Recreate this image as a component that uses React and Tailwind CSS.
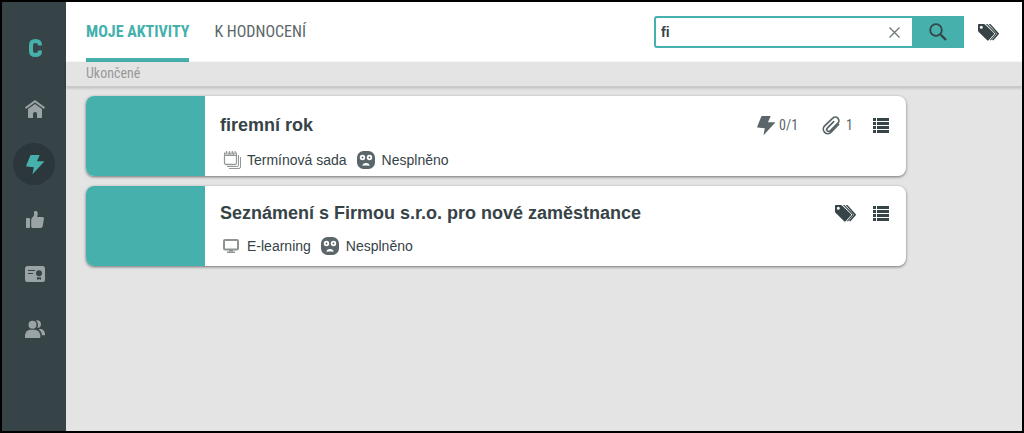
import { useState } from 'react'

const navItems = [
  { label: 'Domů', Icon: HomeIcon },
  { label: 'Aktivity', Icon: BoltIcon, active: true },
  { label: 'Hodnocení', Icon: ThumbIcon },
  { label: 'Certifikáty', Icon: CertificateIcon },
  { label: 'Lidé', Icon: PeopleIcon },
]

const activities = [
  {
    id: 1,
    title: 'firemní rok',
    type: 'Termínová sada',
    TypeIcon: CalendarsIcon,
    status: 'Nesplněno',
    progress: '0/1',
    attachments: 1,
  },
  {
    id: 2,
    title: 'Seznámení s Firmou s.r.o. pro nové zaměstnance',
    type: 'E-learning',
    TypeIcon: MonitorIcon,
    status: 'Nesplněno',
    tagged: true,
  },
]

export default function App() {
  const [tab, setTab] = useState('MOJE AKTIVITY')
  const [query, setQuery] = useState('fi')

  return (
    <div className="flex min-h-screen border-2 border-black bg-[#e4e4e4] font-['Liberation_Sans',sans-serif] text-[#364347]">
      <Sidebar />
      <div className="flex min-w-0 flex-1 flex-col">
        <header className="flex h-[60px] items-center justify-between bg-white pr-[23px] pl-5">
          <nav className="flex h-full gap-[25px] font-['Roboto_Condensed','Liberation_Sans_Narrow',sans-serif] text-base">
            {['MOJE AKTIVITY', 'K HODNOCENÍ'].map((name) => (
              <button
                key={name}
                onClick={() => setTab(name)}
                className={`h-full cursor-pointer border-b-4 pt-1 whitespace-nowrap ${
                  tab === name
                    ? 'border-[#45b0ac] font-bold text-[#45b0ac]'
                    : 'border-transparent text-[#5a6669]'
                }`}
              >
                {name}
              </button>
            ))}
          </nav>
          <div className="flex items-center gap-[14px]">
            <SearchBox query={query} onChange={setQuery} />
            <button aria-label="Štítky" className="cursor-pointer"><TagsIcon /></button>
          </div>
        </header>
        <h2 className="h-[25px] border-b border-[#cbcbcb] pl-5 font-['Roboto_Condensed','Liberation_Sans_Narrow',sans-serif] text-sm leading-[22px] text-[#999999] shadow-[0_1px_3px_rgba(0,0,0,0.2)]">
          Ukončené
        </h2>
        <main className="flex max-w-[860px] flex-col gap-[10px] px-5 pt-[9px] pb-[10px]">
          {activities.map((item) => <ActivityCard key={item.id} item={item} />)}
        </main>
      </div>
    </div>
  )
}

function Sidebar() {
  return (
    <aside className="flex w-16 shrink-0 flex-col items-center bg-[#364347] pt-[25px]">
      <a href="#" aria-label="Logo" className="flex h-[42px] items-center pl-[2px]">
        <svg width="13" height="18" viewBox="0 0 13 18" fill="none" stroke="#45b0ac" strokeWidth="4">
          <path d="M11 6.5V6Q11 2 6.5 2Q2 2 2 6V12Q2 16 6.5 16Q11 16 11 12V11.5" />
        </svg>
      </a>
      <nav className="mt-[19px] flex flex-col gap-[13px]">
        {navItems.map(({ label, Icon, active }) => (
          <a
            key={label}
            href="#"
            aria-label={label}
            className={`flex size-[42px] items-center justify-center rounded-full pl-[2px] ${
              active ? 'bg-[#2b373b] text-[#45b0ac]' : 'text-[#9aa3a5]'
            }`}
          >
            <Icon />
          </a>
        ))}
      </nav>
    </aside>
  )
}

function SearchBox({ query, onChange }) {
  return (
    <form className="flex h-8 w-[310px] rounded-l-[3px] border-2 border-r-0 border-[#45b0ac]" onSubmit={(e) => e.preventDefault()}>
      <input
        aria-label="Hledat"
        value={query}
        onChange={(e) => onChange(e.target.value)}
        className="min-w-0 flex-1 pl-[5px] text-sm font-bold text-[#364347] outline-none"
      />
      <button type="button" aria-label="Vymazat" onClick={() => onChange('')} className="flex w-9 cursor-pointer items-center justify-center">
        <svg width="11" height="11" viewBox="0 0 11 11" stroke="#69757a" strokeWidth="1.2">
          <path d="M.5.5l10 10M10.5.5l-10 10" />
        </svg>
      </button>
      <button type="submit" aria-label="Vyhledat" className="flex w-[52px] cursor-pointer items-center justify-center bg-[#45b0ac]">
        <svg width="18" height="18" viewBox="0 0 18 18" fill="none" stroke="#364347">
          <circle cx="7" cy="7" r="5.8" strokeWidth="1.8" />
          <path d="M10.8 10.8l1.4 1.4" strokeWidth="1.8" />
          <path d="M12 12l5 5" strokeWidth="2.4" />
        </svg>
      </button>
    </form>
  )
}

function ActivityCard({ item }) {
  const { title, type, TypeIcon, status, progress, attachments, tagged } = item
  return (
    <article className="flex min-h-20 overflow-hidden rounded-lg bg-white shadow-[0_1px_3px_rgba(0,0,0,0.5)]">
      <div className="w-[119px] shrink-0 bg-[#45b0ac]" />
      <div className="min-w-0 flex-1 pt-[14px] pr-[17px] pl-[15px]">
        <div className="flex items-center justify-between">
          <h3 className="text-lg leading-[26px] font-bold">{title}</h3>
          <div className="flex items-center font-['Roboto_Condensed','Liberation_Sans_Narrow',sans-serif] text-sm text-[#5a6669]">
            {progress && (
              <span className="mr-6 flex items-center gap-1 leading-[30px]"><BoltIcon />{progress}</span>
            )}
            {attachments && (
              <span className="mr-5 flex items-center gap-[6px] leading-[30px]"><ClipIcon />{attachments}</span>
            )}
            {tagged && (
              <button aria-label="Štítky" className="mr-[17px] cursor-pointer text-[#364347]"><TagsIcon /></button>
            )}
            <button aria-label="Seznam" className="cursor-pointer text-[#364347]"><ListIcon /></button>
          </div>
        </div>
        <div className="mt-2 flex h-[23px] items-center text-sm">
          <span className="flex w-[27px] pl-[3px]"><TypeIcon /></span>
          <span>{type}</span>
          <span className="mr-[7px] ml-[10px]"><FaceIcon /></span>
          <span>{status}</span>
        </div>
      </div>
    </article>
  )
}

function HomeIcon() {
  return (
    <svg width="20" height="18" viewBox="0 0 20 18" fill="currentColor">
      <path d="M10 0L0 7.2l1 1.8 9-6.400 9 6.400 1-1.800z" />
      <path d="M10 4L3 9v8.200q0 .8.8.8H8v-4q0-2 2-2t2 2v4h4.200q.8 0 .8-.8V9z" />
    </svg>
  )
}

function BoltIcon() {
  return (
    <svg width="18" height="19" viewBox="0 0 18 19" fill="currentColor">
      <path d="M5 0h8.200q.6 0 .3.600L11 6.200h6.500q.9 0 .3.800L7 18.700q-.5.500-.4-.2l1.200-6.200L.6 11.500q-.8-.1-.4-.8L4.300.5Q4.500 0 5 0z" />
    </svg>
  )
}

function ThumbIcon() {
  return (
    <svg width="18" height="17" viewBox="0 0 18 17" fill="currentColor">
      <rect y="7" width="4" height="10" rx="1" />
      <path d="M5.200 8L8 4.500V1q0-1 1-1h1.200q1.600.3 1.600 2.500L11.200 6H16.500q1.500 0 1.500 1.500l-1.300 7.800Q16.400 17 14.700 17H6.500q-1.300-.2-1.300-1.500z" />
    </svg>
  )
}

function CertificateIcon() {
  return (
    <svg width="20" height="16" viewBox="0 0 20 16">
      <rect width="20" height="16" rx="2.5" fill="currentColor" />
      <path d="M3 4.500h7M3 7.500h5" stroke="#364347" strokeWidth="1.2" />
      <circle cx="14" cy="7.3" r="3" fill="#364347" />
      <path d="M12 11.200h4V14l-2-1-2 1z" fill="#364347" />
    </svg>
  )
}

function PeopleIcon() {
  return (
    <svg width="20" height="18" viewBox="0 0 20 18" fill="currentColor">
      <circle cx="7.5" cy="4.7" r="4" />
      <path d="M0 18v-3Q1 10 5 9.700h5q4 .3 5.300 5.300V17q0 1-1 1z" />
      <path d="M11.500 0.200Q16 .2 16 4.200q0 3-3 3.800-.6 0-.5-.6 1.500-3.400-1.100-6.300-.5-.8.1-.9zM14 9h2q3.200.5 4 4.500v1.700h-3q-.5-3.700-3.300-6.200z" />
    </svg>
  )
}

function TagsIcon() {
  return (
    <svg width="21" height="17" viewBox="0 0 21 17" fill="#364347">
      <path fillRule="evenodd" d="M.8 0h4.800q1 0 1.700.7l8.500 8.400q.7.700 0 1.400l-5.200 5.800q-.7.700-1.400 0L.7 8Q0 7.300 0 6.400V.8Q0 0 .8 0zM3.300 1.700a1.500 1.500 0 100 3 1.500 1.500 0 000-3z" />
      <path d="M8 0h1.500l8.700 9q.7.700 0 1.400l-5.500 6.200-.8-.7 5.400-6.200z" />
      <path d="M10.700 0h1.700l8.200 9q.7.700 0 1.400l-5.400 6.200-1.200-.8 5.100-6z" />
    </svg>
  )
}

function ClipIcon() {
  return (
    <svg width="18" height="19" viewBox="2 2 20 21" fill="none" stroke="currentColor" strokeWidth="1.9" strokeLinecap="round">
      <path d="M20.400 11.300l-8.300 8.700a5 5 0 01-7.200-7L14 4.400a3.900 3.900 0 015.600 5.500l-8.500 8.600a2.200 2.200 0 01-3.200-3.100L15 8.300" />
    </svg>
  )
}

function ListIcon() {
  return (
    <svg width="16" height="15" viewBox="0 0 16 15" fill="currentColor">
      <path d="M0 0h3v3H0zM4 0h12v3H4zM0 4h3v3H0zM4 4h12v3H4zM0 8h3v3H0zM4 8h12v3H4zM0 12h3v3H0zM4 12h12v3H4z" />
    </svg>
  )
}

function CalendarsIcon() {
  return (
    <svg width="19" height="18" viewBox="0 0 19 18" fill="none" stroke="#949898">
      <path d="M1.500 4v8q0 1.500 1.500 1.500h9q1.500 0 1.500-1.500V4" strokeWidth="1.3" />
      <path d="M1 3h1.500M4.500 3h1.200M7.300 3h1.200M10 3h1M12.800 3H14" strokeWidth="3" />
      <path d="M3.500 0v3.500M6.500 0v3.500M9.300 0v3.500M12 0v3.500" strokeWidth="1.2" />
      <path d="M1 4.500h13" />
      <path d="M4 15.500h10q1.500 0 1.500-1.500V4M6 17.500h10q1.500 0 1.500-1.500V6" />
    </svg>
  )
}

function MonitorIcon() {
  return (
    <svg width="16" height="14" viewBox="0 0 16 14" fill="none" stroke="#8f9393">
      <rect x="1" y="1" width="14" height="9.5" rx="1" strokeWidth="2" />
      <path d="M6 11.500h4M4 13.200h8" strokeWidth="1.6" />
    </svg>
  )
}

function FaceIcon() {
  return (
    <svg width="18" height="18" viewBox="0 0 18 18">
      <rect width="18" height="18" rx="6.5" fill="#5a6669" />
      <circle cx="5.5" cy="6.5" r="2.7" fill="white" />
      <circle cx="12.5" cy="6.5" r="2.7" fill="white" />
      <circle cx="5.5" cy="6.5" r=".9" fill="#5a6669" />
      <circle cx="12.5" cy="6.5" r=".9" fill="#5a6669" />
      <path d="M5.500 15q0-3 3.500-3t3.500 3l-1.500-.6H7z" fill="white" />
    </svg>
  )
}
